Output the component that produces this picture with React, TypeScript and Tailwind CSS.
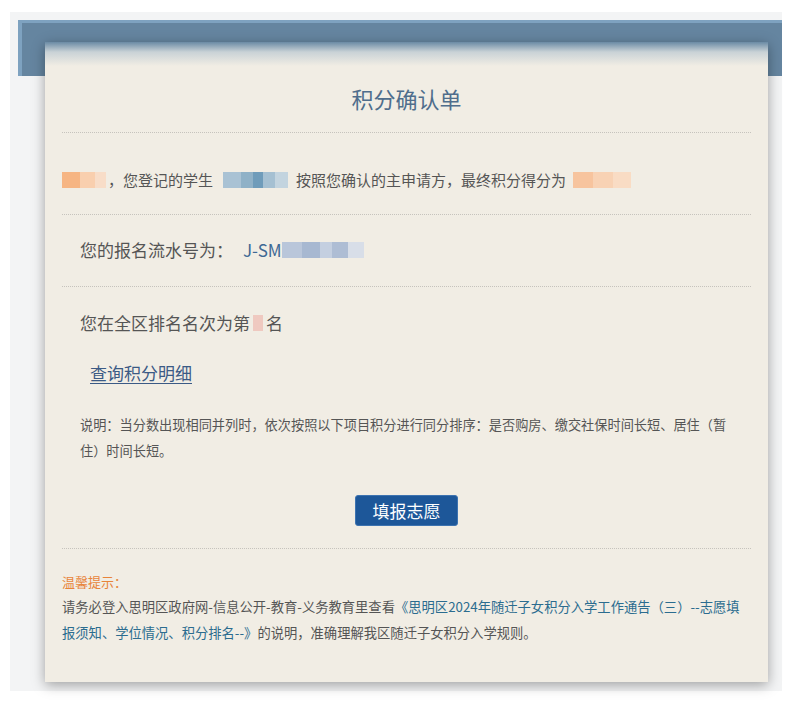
const FONT = '"Noto Sans CJK SC", "Noto Sans", sans-serif';

// Mosaic blocks that stand in for the blurred-out personal data
function Mosaic({ colors, widths, className = '' }: { colors: string[]; widths: number[]; className?: string }) {
  return (
    <span className={`inline-flex h-[16px] align-middle blur-[0.6px] ${className}`}>
      {colors.map((c, i) => (
        <span key={i} className="h-full" style={{ background: c, width: widths[i] }} />
      ))}
    </span>
  );
}

function Divider() {
  return <div className="border-t border-dotted border-[#c6c3bd]" />;
}

export default function App() {
  return (
    <div className="w-[800px] h-[704px] bg-white pt-[12px] pl-[10px]" style={{ fontFamily: FONT }}>
      <div className="w-[772px] bg-[#f3f4f5] pt-[8px] pb-[9px]">
        {/* Blue header band */}
        <div className="ml-[8px] h-[56px] bg-[#6585a0] border-t-[3px] border-l-[4px] border-[#7ea2c0]" />

        {/* Confirmation card */}
        <div className="relative ml-[35px] w-[723px] -mt-[34px] px-[17px] pb-[36px] bg-[linear-gradient(180deg,#6b8ba5_0px,#c9d2d6_10px,#f1ede4_24px)] shadow-[0_3px_12px_rgba(0,0,0,0.35)]">
          <h1 className="pt-[40px] pb-[18px] text-center text-[22px] leading-[32px] text-[#4f6d8c] font-normal">
            积分确认单
          </h1>
          <Divider />

          <div className="pt-[34px] pb-[21px] text-[15px] leading-[26px] text-[#555] flex items-center">
            <Mosaic colors={['#f6b583', '#f9cfae', '#f8ddc8']} widths={[18, 15, 11]} />
            <span className="ml-[2px]">，您登记的学生</span>
            <Mosaic className="ml-[10px]" colors={['#a9c2d4', '#8fb1c7', '#6f9cba', '#a5c0d2', '#c3d4df']} widths={[18, 12, 10, 12, 13]} />
            <span className="ml-[8px]">按照您确认的主申请方，最终积分得分为</span>
            <Mosaic className="ml-[7px]" colors={['#f7c49e', '#f8d2b4', '#f9dcc4']} widths={[20, 20, 18]} />
          </div>
          <Divider />

          <div className="pl-[18px] pt-[21px] pb-[22px] text-[17px] leading-[28px] text-[#555] flex items-center">
            <span>您的报名流水号为：</span>
            <span className="ml-[10px] text-[#3d6894]">J-SM</span>
            <Mosaic colors={['#b9c6da', '#a7b8d1', '#c4cfe0', '#aebdd4', '#d8dee8']} widths={[20, 18, 12, 16, 16]} />
          </div>
          <Divider />

          <div className="pl-[18px] pt-[22px] pb-[22px]">
            <div className="text-[17px] leading-[28px] text-[#555] flex items-center">
              <span>您在全区排名名次为第</span>
              <Mosaic className="mx-[3px]" colors={['#efc9c0']} widths={[10]} />
              <span>名</span>
            </div>
            <a href="#" className="block mt-[22px] ml-[10px] w-fit text-[17px] leading-[28px] text-[#3b5a85] underline underline-offset-[3px]">
              查询积分明细
            </a>
            <p className="mt-[25px] w-[652px] text-[13.2px] leading-[26px] text-[#555]">
              说明：当分数出现相同并列时，依次按照以下项目积分进行同分排序：是否购房、缴交社保时间长短、居住（暂住）时间长短。
            </p>
            <div className="mt-[31px] flex justify-center pr-[18px]">
              <button className="h-[31px] w-[103px] rounded-[3px] bg-[#1d5799] border border-[#3d73b0] text-white text-[17px] leading-none">
                填报志愿
              </button>
            </div>
          </div>
          <Divider />

          <div className="pt-[21px]">
            <div className="text-[13px] leading-[24px] text-[#e8843a]">温馨提示：</div>
            <p className="text-[13.3px] leading-[26px] text-[#555]">
              请务必登入思明区政府网-信息公开-教育-义务教育里查看
              <span className="text-[#2b6c8f]">《思明区2024年随迁子女积分入学工作通告（三）--志愿填报须知、学位情况、积分排名--》</span>
              的说明，准确理解我区随迁子女积分入学规则。
            </p>
          </div>
        </div>
      </div>
    </div>
  );
}
